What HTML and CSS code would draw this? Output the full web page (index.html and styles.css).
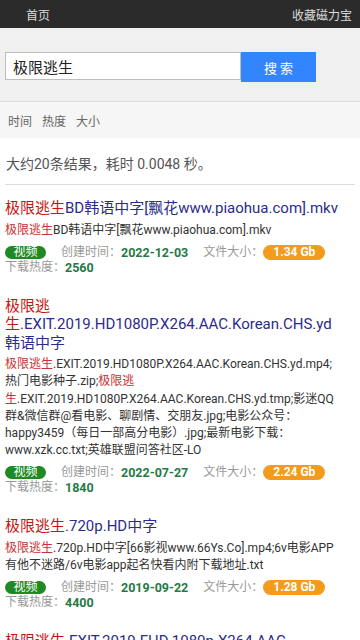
FILE: index.html
```html
<!DOCTYPE html>
<html lang="zh-CN">
<head>
<meta charset="utf-8">
<meta name="viewport" content="width=device-width, initial-scale=1">
<title>极限逃生 - 搜索</title>
<link rel="stylesheet" href="styles.css">
</head>
<body>
<div class="topbar">
  <a class="top-link">首页</a>
  <a class="top-link">收藏磁力宝</a>
</div>
<form class="search">
  <input class="search-input" type="text" value="极限逃生">
  <button class="search-btn" type="button">搜 索</button>
</form>
<div class="filters">
  <span>时间</span><span>热度</span><span>大小</span>
</div>
<div class="main">
  <div class="summary">大约20条结果，耗时 0.0048 秒。</div>

  <div class="item">
    <div class="title"><span class="kw">极限逃生</span>BD韩语中字[飘花www.piaohua.com].mkv</div>
    <div class="desc"><span class="kw">极限逃生</span>BD韩语中字[飘花www.piaohua.com].mkv</div>
    <div class="meta">
      <span class="tag">视频</span>
      <span class="field">创建时间：<b class="val">2022-12-03</b></span>
      <span class="field">文件大小：<span class="size">1.34 Gb</span></span>
      <span class="field">下载热度：<b class="val">2560</b></span>
    </div>
  </div>

  <div class="item">
    <div class="title"><span class="kw">极限逃生</span>.EXIT.2019.HD1080P.X264.AAC.Korean.CHS.yd韩语中字</div>
    <div class="desc"><span class="kw">极限逃生</span>.EXIT.2019.HD1080P.X264.AAC.Korean.CHS.yd.mp4;热门电影种子.zip;<span class="kw">极限逃生</span>.EXIT.2019.HD1080P.X264.AAC.Korean.CHS.yd.tmp;影迷QQ群&amp;微信群@看电影、聊剧情、交朋友.jpg;电影公众号：happy3459（每日一部高分电影）.jpg;最新电影下载：www.xzk.cc.txt;英雄联盟问答社区-LO</div>
    <div class="meta">
      <span class="tag">视频</span>
      <span class="field">创建时间：<b class="val">2022-07-27</b></span>
      <span class="field">文件大小：<span class="size">2.24 Gb</span></span>
      <span class="field">下载热度：<b class="val">1840</b></span>
    </div>
  </div>

  <div class="item">
    <div class="title"><span class="kw">极限逃生</span>.720p.HD中字</div>
    <div class="desc"><span class="kw">极限逃生</span>.720p.HD中字[66影视www.66Ys.Co].mp4;6v电影APP有他不迷路/6v电影app起名快看内附下载地址.txt</div>
    <div class="meta">
      <span class="tag">视频</span>
      <span class="field">创建时间：<b class="val">2019-09-22</b></span>
      <span class="field">文件大小：<span class="size">1.28 Gb</span></span>
      <span class="field">下载热度：<b class="val">4400</b></span>
    </div>
  </div>

  <div class="item">
    <div class="title"><span class="kw">极限逃生</span>.EXIT.2019.FHD.1080p.X264.AAC Korean.CHS.yd韩语中字</div>
    <div class="desc"><span class="kw">极限逃生</span>.EXIT.2019.FHD.1080p.X264.AAC.Korean.CHS.yd.mp4</div>
  </div>
</div>
</body>
</html>
```

FILE: styles.css
```css
* {
  box-sizing: border-box;
}

html, body {
  margin: 0;
  padding: 0;
  background: #ffffff;
}

body {
  font-family: Roboto, "Noto Sans CJK SC", sans-serif;
  color: #333333;
}

.topbar {
  height: 28px;
  background: #2b2b2b;
  display: flex;
  align-items: center;
  justify-content: space-between;
  padding: 0 8px 0 26px;
  font-size: 12px;
}

.top-link {
  color: #dddddd;
  text-decoration: none;
}

.search {
  margin: 0;
  background: #f0f0f0;
  padding: 24px 5px 19px;
  display: flex;
  align-items: flex-start;
  border-bottom: 1px solid #dddddd;
}

.search-input {
  width: 236px;
  height: 28px;
  margin: 0;
  border: 1px solid #bdbdbd;
  border-radius: 0;
  background: #ffffff;
  padding: 0 7px;
  font-family: Roboto, "Noto Sans CJK SC", sans-serif;
  font-size: 15px;
  color: #222222;
  outline: none;
}

.search-btn {
  width: 75px;
  height: 30px;
  margin: 0;
  border: none;
  border-radius: 0;
  background: #3385ff;
  color: #ffffff;
  font-family: Roboto, "Noto Sans CJK SC", sans-serif;
  font-size: 13px;
  padding: 0;
}

.filters {
  height: 36px;
  background: #f6f6f6;
  display: flex;
  align-items: center;
  gap: 10px;
  padding-left: 8px;
  font-size: 12px;
  color: #666666;
}

.main {
  padding: 0 5px;
}

.summary {
  padding: 16px 0 10px 1px;
  line-height: 20px;
  font-size: 14px;
  color: #555555;
  border-bottom: 1px solid #dddddd;
}

.item {
  padding: 14px 14px 8px 0;
}

.title {
  font-size: 15px;
  line-height: 18.5px;
  color: #2c2c8a;
}

.kw {
  color: #c81414;
}

.desc {
  margin-top: 4px;
  font-size: 12px;
  line-height: 17.2px;
  color: #333333;
}

.desc .kw {
  color: #c83232;
}

.meta {
  margin-top: 6px;
  display: flex;
  flex-wrap: wrap;
  align-items: center;
  column-gap: 15px;
  font-size: 12px;
  line-height: 15px;
  color: #999999;
}

.field {
  display: inline-flex;
  align-items: center;
  white-space: nowrap;
  height: 15px;
}

.tag {
  display: inline-block;
  height: 13px;
  line-height: 13px;
  padding: 0 8.5px;
  border-radius: 7px;
  background: #1f8a24;
  color: #ffffff;
  font-size: 12px;
}

.val {
  color: #257a45;
  font-weight: bold;
  font-size: 12.5px;
}

.size {
  display: inline-block;
  height: 15px;
  line-height: 15px;
  padding: 0 10px;
  border-radius: 8px;
  background: #f29b1d;
  color: #ffffff;
  font-weight: bold;
  font-size: 12px;
}
```
